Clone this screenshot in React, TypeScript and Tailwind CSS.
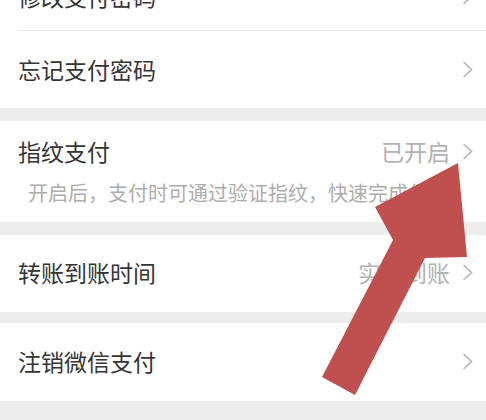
import React from 'react';

const Chevron: React.FC = () => (
  <svg width="11" height="17" viewBox="0 0 11 17" className="shrink-0">
    <polyline points="1.5,1 9.5,8.5 1.5,16" fill="none" stroke="#b4b4b4" strokeWidth="1.6" />
  </svg>
);

type RowProps = { title: string; value?: string; className?: string };

const Row: React.FC<RowProps> = ({ title, value, className = '' }) => (
  <div className={`flex items-center justify-between pl-[18px] pr-[13px] ${className}`}>
    <span className="text-[23px] text-[#353535] leading-none">{title}</span>
    <div className="flex items-center gap-[12px]">
      {value && <span className="text-[23px] text-[#b2b2b2] leading-none">{value}</span>}
      <Chevron />
    </div>
  </div>
);

const App: React.FC = () => {
  return (
    <div
      className="relative w-[486px] h-[420px] overflow-hidden bg-[#ededed]"
      style={{ fontFamily: '"Noto Sans CJK SC", "Noto Sans", sans-serif' }}
    >
      {/* Section 1 */}
      <div className="bg-white -mt-[44px]">
        <Row title="修改支付密码" className="h-[74px] pt-[6px]" />
        <div className="ml-[18px] h-px bg-[#e6e6e6]" />
        <Row title="忘记支付密码" className="h-[77px] pb-[1px]" />
      </div>

      {/* Section 2 */}
      <div className="bg-white mt-[13px] pt-[14px] pb-[17px]">
        <Row title="指纹支付" value="已开启" className="h-[32px]" />
        <div className="mt-[14px] pl-[28px] text-[20px] leading-[24px] text-[#adadad] whitespace-nowrap">
          开启后，支付时可通过验证指纹，快速完成付款。
        </div>
      </div>

      {/* Section 3 */}
      <div className="bg-white mt-[13px]">
        <Row title="转账到账时间" value="实时到账" className="h-[77px] pb-[2px]" />
      </div>

      {/* Section 4 */}
      <div className="bg-white mt-[11px]">
        <Row title="注销微信支付" className="h-[78px] pb-[1px]" />
      </div>

      {/* Annotation arrow */}
      <svg className="absolute inset-0 pointer-events-none" width="486" height="420" viewBox="0 0 486 420">
        <polygon
          points="458,163 467,257 425,258 355,395 322,377 393,240 375,207"
          fill="#c0504f"
        />
      </svg>
    </div>
  );
};

export default App;
